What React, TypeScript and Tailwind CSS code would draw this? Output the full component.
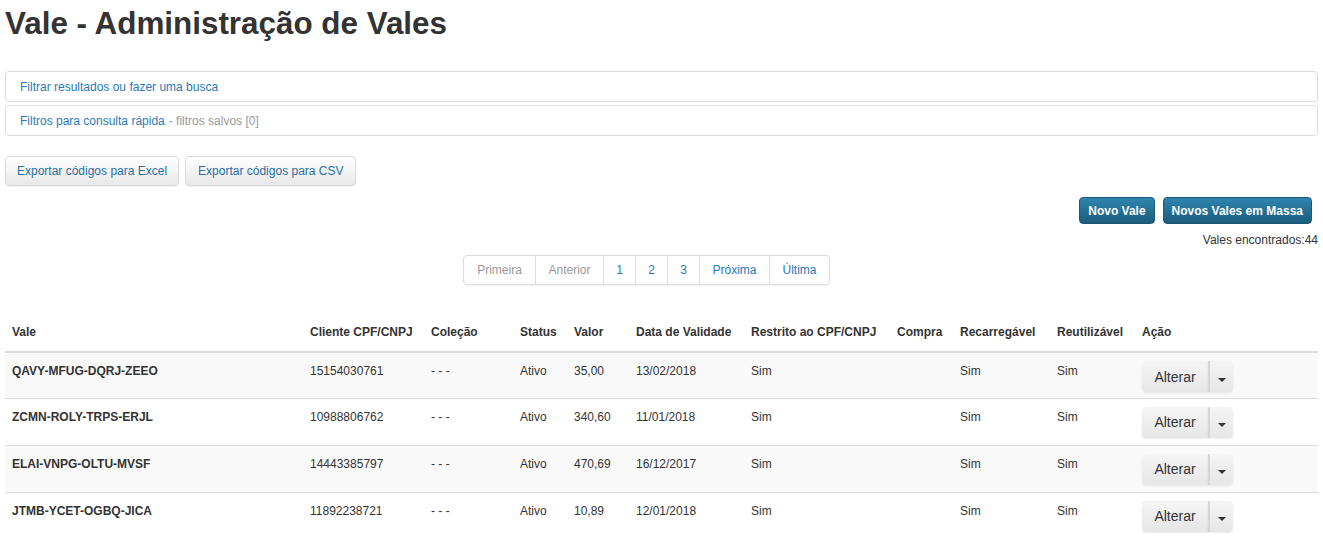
import React from 'react';

const rows = [
  { code: 'QAVY-MFUG-DQRJ-ZEEO', doc: '15154030761', valor: '35,00', data: '13/02/2018' },
  { code: 'ZCMN-ROLY-TRPS-ERJL', doc: '10988806762', valor: '340,60', data: '11/01/2018' },
  { code: 'ELAI-VNPG-OLTU-MVSF', doc: '14443385797', valor: '470,69', data: '16/12/2017' },
  { code: 'JTMB-YCET-OGBQ-JICA', doc: '11892238721', valor: '10,89', data: '12/01/2018' },
];

const pages = [
  { label: 'Primeira', w: 'w-[71px]', off: true },
  { label: 'Anterior', w: 'w-[68px]', off: true },
  { label: '1', w: 'w-[32px]', off: false },
  { label: '2', w: 'w-[32px]', off: false },
  { label: '3', w: 'w-[32px]', off: false },
  { label: 'Próxima', w: 'w-[70px]', off: false },
  { label: 'Última', w: 'w-[60px]', off: false },
];

export default function App() {
  return (
    <div className="min-h-[536px] bg-white px-[5px] text-[12px] text-[#333] [font-family:'Liberation_Sans',Arial,sans-serif]">
      {/* Title */}
      <h1 className="pt-[6px] text-[31.4px] font-bold leading-[36px] text-[#333]">
        Vale - Administração de Vales
      </h1>

      {/* Filter panels */}
      <div className="mt-[29px] flex flex-col gap-[3px]">
        <div className="flex h-[31px] items-center rounded-[4px] border border-[#ddd] px-[14px] text-[#2a7ab8]">
          Filtrar resultados ou fazer uma busca
        </div>
        <div className="flex h-[31px] items-center rounded-[4px] border border-[#ddd] px-[14px]">
          <span className="text-[#2a7ab8]">Filtros para consulta rápida</span>
          <span className="ml-[4px] text-[#999]">- filtros salvos [0]</span>
        </div>
      </div>

      {/* Export buttons */}
      <div className="mt-[20px] flex gap-[6px]">
        <button className="h-[30px] rounded-[4px] border border-[#d9d9d9] bg-gradient-to-b from-white to-[#e8e8e8] px-[11px] text-[12px] text-[#2a6fa6] shadow-[0_1px_1px_rgba(0,0,0,0.05)]">
          Exportar códigos para Excel
        </button>
        <button className="h-[30px] rounded-[4px] border border-[#d9d9d9] bg-gradient-to-b from-white to-[#e8e8e8] px-[12px] text-[12px] text-[#2a6fa6] shadow-[0_1px_1px_rgba(0,0,0,0.05)]">
          Exportar códigos para CSV
        </button>
      </div>

      {/* Action buttons */}
      <div className="mt-[11px] flex justify-end gap-[8px] pr-[6px]">
        <button className="h-[27px] rounded-[4px] border border-[#1a5878] bg-gradient-to-b from-[#2e86b0] to-[#1b5b7c] px-[8px] text-[12px] font-bold text-white">
          Novo Vale
        </button>
        <button className="h-[27px] rounded-[4px] border border-[#1a5878] bg-gradient-to-b from-[#2e86b0] to-[#1b5b7c] px-[8px] text-[12px] font-bold text-white">
          Novos Vales em Massa
        </button>
      </div>
      <div className="mt-[9px] text-right leading-[14px]">Vales encontrados:44</div>

      {/* Pagination */}
      <div className="mt-[8px] flex justify-center pr-[30px]">
        <div className="flex h-[30px] overflow-hidden rounded-[4px] border border-[#ddd] shadow-[0_1px_2px_rgba(0,0,0,0.05)]">
          {pages.map((p, i) => (
            <div
              key={p.label}
              className={`flex items-center justify-center ${p.w} ${i > 0 ? 'border-l border-[#ddd]' : ''} ${p.off ? 'text-[#999]' : 'text-[#2a7ab8]'}`}
            >
              {p.label}
            </div>
          ))}
        </div>
      </div>

      {/* Table */}
      <table className="mt-[35px] w-full table-fixed border-collapse">
        <colgroup>
          <col className="w-[298px]" />
          <col className="w-[121px]" />
          <col className="w-[89px]" />
          <col className="w-[54px]" />
          <col className="w-[62px]" />
          <col className="w-[115px]" />
          <col className="w-[146px]" />
          <col className="w-[63px]" />
          <col className="w-[97px]" />
          <col className="w-[85px]" />
          <col />
        </colgroup>
        <thead>
          <tr className="h-[32px] border-b-2 border-[#ddd] text-left">
            {['Vale', 'Cliente CPF/CNPJ', 'Coleção', 'Status', 'Valor', 'Data de Validade', 'Restrito ao CPF/CNPJ', 'Compra', 'Recarregável', 'Reutilizável', 'Ação'].map((h) => (
              <th key={h} className="whitespace-nowrap px-[7px] pt-[3px] align-top font-bold">
                {h}
              </th>
            ))}
          </tr>
        </thead>
        <tbody>
          {rows.map((r, i) => (
            <tr key={r.code} className={`${i === 0 ? 'h-[46px]' : 'h-[47px]'} border-b border-[#ddd] ${i % 2 === 0 ? 'bg-[#f9f9f9]' : 'bg-white'}`}>
              <td className="px-[7px] pt-[9px] align-top font-bold">{r.code}</td>
              <td className="px-[7px] pt-[9px] align-top">{r.doc}</td>
              <td className="px-[7px] pt-[9px] align-top">- - -</td>
              <td className="px-[7px] pt-[9px] align-top">Ativo</td>
              <td className="px-[7px] pt-[9px] align-top">{r.valor}</td>
              <td className="px-[7px] pt-[9px] align-top">{r.data}</td>
              <td className="px-[7px] pt-[9px] align-top">Sim</td>
              <td className="px-[7px] pt-[9px] align-top"></td>
              <td className="px-[7px] pt-[9px] align-top">Sim</td>
              <td className="px-[7px] pt-[9px] align-top">Sim</td>
              <td className="px-[7px] pt-[8px] align-top">
                <div className="flex h-[31px] w-[91px]">
                  <div className="flex w-[66px] items-center justify-center rounded-l-[4px] bg-gradient-to-b from-[#f5f5f5] to-[#e6e6e6] pt-[1px] text-[14px] text-[#333] shadow-[0_1px_2px_rgba(0,0,0,0.08)]">
                    Alterar
                  </div>
                  <div className="flex w-[25px] items-center justify-center rounded-r-[4px] border-l-2 border-[#d6d6d6] bg-gradient-to-b from-[#f5f5f5] to-[#e6e6e6] pt-[6px] shadow-[0_1px_2px_rgba(0,0,0,0.08)]">
                    <span className="h-0 w-0 border-x-[4px] border-t-[4px] border-x-transparent border-t-[#333]" />
                  </div>
                </div>
              </td>
            </tr>
          ))}
        </tbody>
      </table>
    </div>
  );
}
